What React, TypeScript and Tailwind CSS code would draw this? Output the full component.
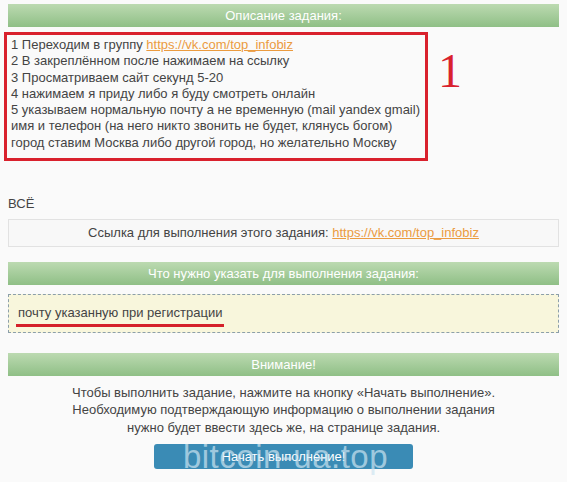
const Bar = ({ title }: { title: string }) => (
  <div className="mx-2 h-[23px] flex items-center justify-center bg-gradient-to-b from-[#bcdab1] to-[#8fbf86] text-white text-[13px] leading-none">
    {title}
  </div>
);

const Link = ({ href }: { href: string }) => (
  <a href={href} className="text-[#eb9b3f] underline">
    {href}
  </a>
);

export default function App() {
  return (
    <div
      className="w-[567px] h-[482px] overflow-hidden bg-[#fafafa] text-[#444] text-[13px] pt-[4px]"
      style={{ fontFamily: '"Liberation Sans", Arial, sans-serif' }}
    >
      <Bar title="Описание задания:" />

      {/* task description with red frame */}
      <div className="flex items-start mt-[5px]">
        <div className="ml-1 w-[424px] border-[3px] border-[#d9212d] pl-1 pt-[2px] pb-[7px] leading-[16.3px]">
          <div>
            1 Переходим в группу <Link href="https://vk.com/top_infobiz" />
          </div>
          <div>2 В закреплённом после нажимаем на ссылку</div>
          <div>3 Просматриваем сайт секунд 5-20</div>
          <div>4 нажимаем я приду либо я буду смотреть онлайн</div>
          <div>5 указываем нормальную почту а не временную (mail yandex gmail)</div>
          <div>имя и телефон (на него никто звонить не будет, клянусь богом)</div>
          <div>город ставим Москва либо другой город, но желательно Москву</div>
        </div>
        <div
          className="ml-[10px] mt-[15px] text-[#d9212d] text-[48px] leading-none"
          style={{ fontFamily: '"Liberation Serif", serif' }}
        >
          1
        </div>
      </div>

      <div className="mx-2 mt-[33px]">ВСЁ</div>

      <div className="mx-2 mt-[5px] h-[28px] border border-[#e2e2e2] bg-[#f8f8f8] flex items-center justify-center">
        <span>
          Ссылка для выполнения этого задания: <Link href="https://vk.com/top_infobiz" />
        </span>
      </div>

      <div className="mt-[15px]">
        <Bar title="Что нужно указать для выполнения задания:" />
      </div>

      <div className="mx-2 mt-[9px] h-[39px] border border-dashed border-[#8c9faa] bg-[#f8f6dc] flex items-center pl-[9px]">
        <span className="border-b-[3px] border-[#d4202a] pb-[1px] px-[2px] -ml-[2px] mt-[4px]">
          почту указанную при регистрации
        </span>
      </div>

      <div className="mt-[20px]">
        <Bar title="Внимание!" />
      </div>

      <div className="mt-[8px] text-center leading-[17.5px]">
        <div>Чтобы выполнить задание, нажмите на кнопку «Начать выполнение».</div>
        <div>Необходимую подтверждающую информацию о выполнении задания</div>
        <div>нужно будет ввести здесь же, на странице задания.</div>
      </div>

      <div className="mt-[8px] flex justify-center">
        <div className="relative w-[259px] h-[25px] rounded-[3px] bg-[#3a8bb5] flex items-center justify-center text-white text-[13px]">
          Начать выполнение!
          {/* watermark over the button */}
          <div className="absolute inset-0 pl-[4px] flex items-center justify-center text-[33px] leading-none text-[#cde5f1]/70 tracking-[0.5px] pointer-events-none">
            bitcoin-ua.top
          </div>
        </div>
      </div>
    </div>
  );
}
